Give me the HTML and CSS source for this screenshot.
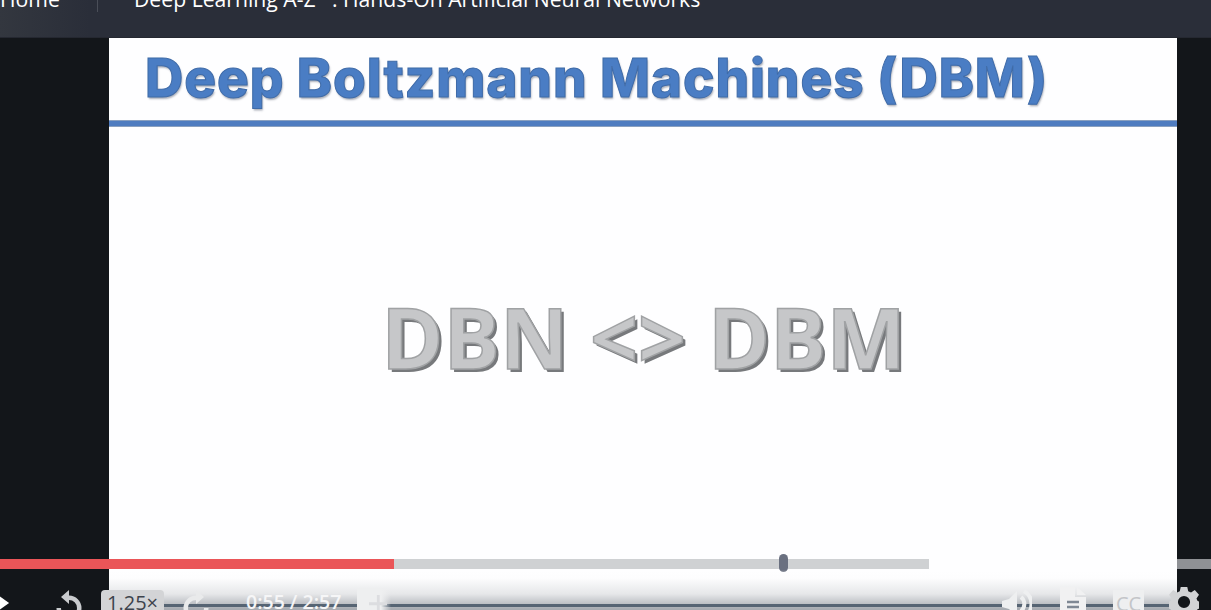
FILE: index.html
```html
<!DOCTYPE html>
<html lang="en">
<head>
<meta charset="utf-8">
<title>Deep Boltzmann Machines</title>
<link rel="stylesheet" href="styles.css">
</head>
<body>
<header class="topbar">
  <div class="topbar-row">
    <a class="home">Home</a>
    <span class="divider"></span>
    <span class="course">Deep Learning A-Z™: Hands-On Artificial Neural Networks</span>
  </div>
</header>
<main class="stage">
  <section class="slide">
    <div class="slide-head"><h1 class="slide-title">Deep Boltzmann Machines (DBM)</h1></div>
    <div class="slide-body"><p class="slide-big">DBN &lt;&gt; DBM</p></div>
  </section>
  <div class="progress">
    <div class="seg-played"></div>
    <div class="seg-buffered"><span class="handle"></span></div>
    <div class="seg-clear"></div>
    <div class="seg-end"></div>
  </div>
  <div class="controls">
    <div class="controls-line"></div>
    <div class="controls-row">
      <svg class="ico play" viewBox="0 0 12 16"><path d="M0 0l11 8-11 8z"/></svg>
      <svg class="ico rewind" viewBox="0 0 28 28"><path d="M14 0L6 7l8 7V10a8 8 0 1 1-8 8H1.500a12.500 12.500 0 1 0 12.500-12.500z"/></svg>
      <span class="speed">1.25×</span>
      <svg class="ico forward" viewBox="0 0 28 28"><path d="M14 0l8 7-8 7V10a8 8 0 1 0 8 8h4.500A12.500 12.500 0 1 1 14 5.500z"/></svg>
      <span class="time">0:55 / 2:57</span>
      <span class="plus-box"><svg class="ico plus" viewBox="0 0 16 16"><path d="M7 0h2.500v6.500H16v2.500H9.500V16H7V9H0V6.500h7z"/></svg></span>
      <span class="spacer"></span>
      <svg class="ico volume" viewBox="0 0 30 28"><path d="M0 11l7-2 8-8v26l-8-8-7-2z"/><path class="arc" d="M19 7a9 9 0 0 1 0 14M22 1a15 15 0 0 1 0 26"/></svg>
      <svg class="ico note" viewBox="0 0 26 32"><path d="M0 0h15v10h11v22H0z"/><path d="M17 0l9 8h-9z"/><path class="note-lines" d="M7 15h12M7 20h12"/></svg>
      <span class="cc">CC</span>
      <svg class="ico gear" viewBox="0 0 32 32"><path fill-rule="evenodd" d="M12.500 0h7l1 4.500 3 1.300 4-2.500 4.500 5-2.700 3.900 1.200 2.800 4.500 1v6.500l-4.500 1-1.200 2.800 2.700 3.900-4.500 5-4-2.500-3 1.300-1 4.500h-7l-1-4.500-3-1.300-4 2.500-4.500-5 2.700-3.900-1.200-2.800-4.500-1v-6.500l4.500-1 1.200-2.800-2.700-3.900 4.500-5 4 2.500 3-1.300zM16 9.500a6.500 6.500 0 1 0 0 13 6.500 6.500 0 0 0 0-13z"/></svg>
    </div>
  </div>
</main>
</body>
</html>
```
FILE: styles.css
```css
* { box-sizing: border-box; }
html, body { margin: 0; height: 100%; }
body {
  width: 1211px;
  height: 610px;
  overflow: hidden;
  background: #13161a;
  font-family: "Open Sans", "Liberation Sans", sans-serif;
  display: flex;
  flex-direction: column;
}
.topbar {
  height: 38px;
  flex: none;
  overflow: hidden;
  background: linear-gradient(90deg, #33373f 0, #2a2e39 90px, #2a2e39 100%);
  box-shadow: inset 0 -1px 0 #252831;
}
.topbar-row {
  display: flex;
  align-items: center;
  height: 40px;
  margin-top: -22px;
  color: #fff;
  font-size: 21.200px;
  white-space: nowrap;
}
.home { width: 97px; flex: none; }
.divider {
  width: 1px;
  height: 12px;
  align-self: flex-end;
  margin-bottom: 6px;
  background: #4a4e58;
  flex: none;
}
.course { margin-left: 36px; }
.stage {
  position: relative;
  flex: 1;
  min-height: 0;
  display: flex;
  justify-content: flex-start;
  padding-left: 109px;
  background: #13161a;
}
.slide {
  width: 1068px;
  background: #fefeff;
  display: flex;
  flex-direction: column;
}
.slide-head {
  height: 88px;
  border-bottom: 5px solid #4f7cc0;
  box-shadow: 0 1px 0 #8aa0c0, inset 0 -1px 0 #8aa0c0;
  padding-left: 36px;
  padding-top: 5px;
}
.slide-title {
  margin: 0;
  font-family: Inter, "Open Sans", sans-serif;
  font-size: 53px;
  line-height: 70px;
  font-weight: 800;
  letter-spacing: 0.9px;
  white-space: nowrap;
  color: #4a7dc4;
  -webkit-text-stroke: 1px #3f6ba8;
  text-shadow: 1px 2px 2px rgba(70, 80, 100, .45);
}
.slide-body {
  flex: 1;
  display: flex;
  justify-content: center;
}
.slide-big {
  margin: 161px 0 0 1px;
  font-family: "Open Sans", sans-serif;
  font-weight: 700;
  font-size: 84px;
  line-height: 100px;
  color: #c6c7c9;
  -webkit-text-stroke: 1.500px #a0a2a4;
  text-shadow: 3px 3px 0 #77797c;
  white-space: nowrap;
}
.progress {
  position: absolute;
  left: 0;
  right: 0;
  top: 521px;
  height: 10px;
  display: flex;
}
.seg-played { width: 394px; background: #ea5558; }
.seg-buffered { width: 535px; background: #cfd1d3; position: relative; }
.seg-clear { width: 248px; }
.seg-end { flex: 1; background: #8f9195; }
.handle {
  position: absolute;
  left: 385px;
  top: -5px;
  width: 9px;
  height: 18px;
  border-radius: 5px;
  background: #6a7080;
}
.controls {
  position: absolute;
  left: 109px;
  width: 1068px;
  top: 532px;
  height: 40px;
  background: linear-gradient(180deg, rgba(254, 254, 255, 0) 0, #fdfdfe 8px, #e6e7e9 24px, #a7abb1 39px);
}
.controls-line {
  position: absolute;
  left: 0;
  right: 0;
  bottom: 3px;
  height: 3px;
  background: #566473;
}
.controls-row {
  position: absolute;
  left: -109px;
  width: 1211px;
  top: 16px;
  height: 24px;
  overflow: hidden;
  display: flex;
  align-items: flex-start;
}
.ico { display: block; flex: none; fill: #d9dadc; }
.play { width: 11px; height: 16px; margin: 9px 0 0 -1px; fill: #fff; }
.rewind { width: 28px; height: 28px; margin: 4px 0 0 45px; fill: #c9cbce; }
.speed {
  width: 63px;
  height: 30px;
  margin-left: 18px;
  margin-top: 4px;
  padding: 2px 0 0 6px;
  border-radius: 4px 4px 0 0;
  background: #d3d4d6;
  color: #3d434c;
  font-size: 20px;
  line-height: 22px;
}
.forward { width: 28px; height: 28px; margin: 4px 0 0 18px; fill: #e9eaeb; }
.time {
  margin: 5px 0 0 36px;
  width: 111px;
  color: #f6f6f7;
  font-size: 19.500px;
  line-height: 22px;
  font-weight: 600;
  white-space: nowrap;
}
.plus-box {
  width: 34px;
  height: 30px;
  margin-top: 2px;
  background: linear-gradient(90deg, #eeeff0 0, #eeeff0 24px, rgba(238, 239, 240, 0) 100%);
  padding: 7px 0 0 12px;
}
.plus { width: 18px; height: 18px; fill: #dcdde0; }
.spacer { flex: 1; }
.volume { width: 30px; height: 30px; margin-top: 3px; fill: #eeeff0; }
.arc { fill: none; stroke: #eeeff0; stroke-width: 4; }
.note { width: 26px; height: 32px; margin: 1px 0 0 28px; fill: #f1f1f2; }
.note-lines { fill: none; stroke: #7f8894; stroke-width: 2.500; }
.cc {
  width: 31px;
  height: 30px;
  margin: 4px 0 0 27px;
  background: #eeeff0;
  color: #c3c5c8;
  font-size: 20px;
  line-height: 27px;
  text-align: center;
}
.gear { width: 30px; height: 30px; margin: 1px 12px 0 25px; fill: #d2d3d5; }
```
